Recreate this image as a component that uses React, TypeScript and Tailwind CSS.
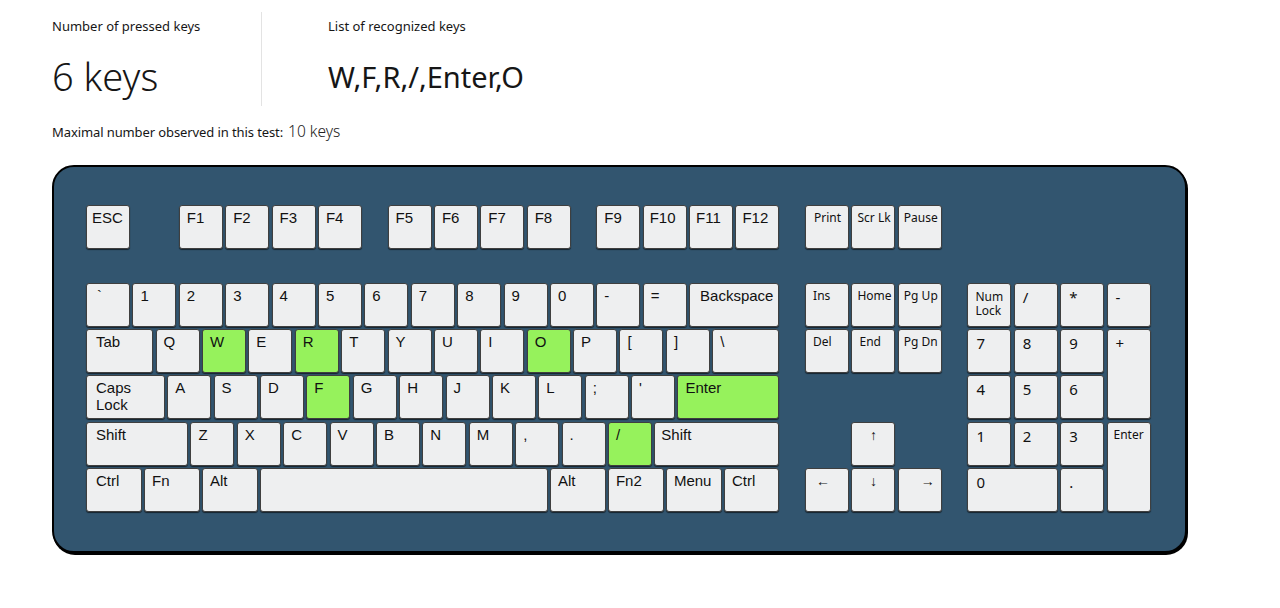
import clsx from 'clsx'

// keyboard geometry: one key unit and the gap between keys
const U = 46.4
const G = 2.4

type K = { l: string; u?: number; on?: boolean; gap?: number; pad?: string }

const fnRow: K[] = [
  { l: 'ESC', pad: 'pl-[5px]' },
  { l: '', gap: 1 },
  { l: 'F1' }, { l: 'F2' }, { l: 'F3' }, { l: 'F4' },
  { l: '', gap: 0.5 },
  { l: 'F5' }, { l: 'F6' }, { l: 'F7' }, { l: 'F8' },
  { l: '', gap: 0.5 },
  { l: 'F9' }, { l: 'F10', pad: 'pl-[6px]' }, { l: 'F11', pad: 'pl-[6px]' }, { l: 'F12', pad: 'pl-[6px]' },
]

const mainRows: K[][] = [
  [
    { l: '`', pad: 'pl-[10px]' }, { l: '1' }, { l: '2' }, { l: '3' }, { l: '4' }, { l: '5' }, { l: '6' },
    { l: '7' }, { l: '8' }, { l: '9' }, { l: '0' }, { l: '-' }, { l: '=' },
    { l: 'Backspace', u: 2, pad: 'pl-[10px]' },
  ],
  [
    { l: 'Tab', u: 1.5, pad: 'pl-[9px]' }, { l: 'Q' }, { l: 'W', on: true }, { l: 'E' }, { l: 'R', on: true },
    { l: 'T' }, { l: 'Y' }, { l: 'U' }, { l: 'I' }, { l: 'O', on: true }, { l: 'P' }, { l: '[' }, { l: ']' },
    { l: '\\', u: 1.5 },
  ],
  [
    { l: 'Caps\nLock', u: 1.75, pad: 'pl-[9px]' }, { l: 'A' }, { l: 'S' }, { l: 'D' }, { l: 'F', on: true },
    { l: 'G' }, { l: 'H' }, { l: 'J' }, { l: 'K' }, { l: 'L' }, { l: ';' }, { l: "'" },
    { l: 'Enter', u: 2.25, on: true },
  ],
  [
    { l: 'Shift', u: 2.25, pad: 'pl-[9px]' }, { l: 'Z' }, { l: 'X' }, { l: 'C' }, { l: 'V' }, { l: 'B' },
    { l: 'N' }, { l: 'M' }, { l: ',' }, { l: '.' }, { l: '/', on: true },
    { l: 'Shift', u: 2.75, pad: 'pl-[6px]' },
  ],
  [
    { l: 'Ctrl', u: 1.25, pad: 'pl-[9px]' }, { l: 'Fn', u: 1.25 }, { l: 'Alt', u: 1.25 }, { l: '', u: 6.25 },
    { l: 'Alt', u: 1.25 }, { l: 'Fn2', u: 1.25 }, { l: 'Menu', u: 1.25 }, { l: 'Ctrl', u: 1.25 },
  ],
]

function Key({ k, className }: { k: K; className?: string }) {
  const u = k.u ?? 1
  return (
    <div
      style={{ width: u * U - G, marginRight: G }}
      className={clsx(
        'h-[44px] shrink-0 whitespace-pre-line rounded-[3px] border border-[#3f3f3f] pt-[3px] text-[15px] leading-[17px] text-[#111] shadow-[0_1px_1px_rgba(0,0,0,0.6)]',
        "font-['Liberation_Sans',Arial,sans-serif]",
        k.on ? 'bg-[#96f25c]' : 'bg-[#eeeff0]',
        k.pad ?? 'pl-[7px]',
        className,
      )}
    >
      {k.l}
    </div>
  )
}

function Row({ keys }: { keys: K[] }) {
  return (
    <div className="flex">
      {keys.map((k, i) =>
        k.gap ? <div key={i} style={{ width: k.gap * U }} className="shrink-0" /> : <Key key={i} k={k} />,
      )}
    </div>
  )
}

// small-label keys used by the nav cluster and numpad
function Cap({ l, className }: { l: string; className?: string }) {
  return (
    <div
      className={clsx(
        'rounded-[3px] border border-[#3f3f3f] bg-[#eeeff0] pt-[4px] text-[#111] shadow-[0_1px_1px_rgba(0,0,0,0.6)]',
        "font-['Noto_Sans',sans-serif]",
        className ?? 'pl-[7px] text-[12px] leading-[15px]',
      )}
    >
      {l}
    </div>
  )
}

function Keyboard() {
  const num = 'pl-[8px] text-[15px] leading-[18px]'
  const arrow = "text-[14px] leading-[15px] font-['DejaVu_Sans',sans-serif]"
  return (
    <div className="ml-[52px] mt-[24px] flex h-[388px] w-[1135px] rounded-[22px] border-2 border-black bg-[#32556f] pl-[32px] pt-[38px] shadow-[1px_2px_0_#000]">
      {/* main block */}
      <div className="flex flex-col">
        <Row keys={fnRow} />
        <div className="mt-[33.7px] flex flex-col gap-[2.4px]">
          {mainRows.map((r, i) => (
            <Row key={i} keys={r} />
          ))}
        </div>
      </div>

      {/* nav cluster */}
      <div className="ml-[23.2px] flex flex-col">
        <div className="grid grid-cols-[repeat(3,44px)] gap-[2.4px]">
          <Cap l="Print" className="h-[44px] pl-[8px] text-[12px] leading-[15px]" />
          <Cap l="Scr Lk" className="h-[44px] pl-[5px] text-[12px] leading-[15px]" />
          <Cap l="Pause" className="h-[44px] pl-[5px] text-[12px] leading-[15px]" />
        </div>
        <div className="mt-[33.7px] grid grid-cols-[repeat(3,44px)] grid-rows-[repeat(5,44px)] gap-[2.4px]">
          <Cap l="Ins" />
          <Cap l="Home" className="pl-[5px] text-[12px] leading-[15px]" />
          <Cap l="Pg Up" className="pl-[5px] text-[12px] leading-[15px]" />
          <Cap l="Del" />
          <Cap l="End" />
          <Cap l="Pg Dn" className="pl-[5px] text-[12px] leading-[15px]" />
          <div className="col-start-2 row-start-4">
            <Cap l="↑" className={clsx('h-full text-center', arrow)} />
          </div>
          <Cap l="←" className={clsx('row-start-5 pl-[10px]', arrow)} />
          <Cap l="↓" className={clsx('row-start-5 text-center', arrow)} />
          <Cap l="→" className={clsx('row-start-5 pr-[6px] text-right', arrow)} />
        </div>
      </div>

      {/* numpad */}
      <div className="ml-[25.6px] mt-[77.7px] grid h-[229.6px] grid-cols-[repeat(4,44px)] grid-rows-[repeat(5,44px)] gap-[2.4px]">
        <Cap l={'Num\nLock'} className="whitespace-pre-line pl-[7px] pt-[6px] text-[12px] leading-[14px]" />
        <Cap l="/" className={num} />
        <Cap l="*" className={num} />
        <Cap l="-" className={num} />
        <Cap l="7" className={num} />
        <Cap l="8" className={num} />
        <Cap l="9" className={num} />
        <div className="row-span-2">
          <Cap l="+" className={clsx(num, 'h-full')} />
        </div>
        <Cap l="4" className={num} />
        <Cap l="5" className={num} />
        <Cap l="6" className={num} />
        <Cap l="1" className={num} />
        <Cap l="2" className={num} />
        <Cap l="3" className={num} />
        <div className="row-span-2">
          <Cap l="Enter" className="h-full text-center text-[12px] leading-[15px]" />
        </div>
        <div className="col-span-2">
          <Cap l="0" className={clsx(num, 'h-full')} />
        </div>
        <Cap l="." className={num} />
      </div>
    </div>
  )
}

export default function App() {
  return (
    <div className="min-h-[608px] w-[1280px] bg-white pt-[12px] text-[#161616] font-['Noto_Sans',sans-serif]">
      <div className="ml-[52px] flex">
        <div className="h-[94px] w-[210px] border-r border-[#e3e3e3] pt-[5px]">
          <div className="text-[13px] leading-[18px]">Number of pressed keys</div>
          <div className="mt-[18px] text-[38px] font-light leading-[46px]">6 keys</div>
        </div>
        <div className="pl-[66px] pt-[5px]">
          <div className="text-[13px] leading-[18px]">List of recognized keys</div>
          <div className="mt-[21px] text-[29px] leading-[42px]">W,F,R,/,Enter,O</div>
        </div>
      </div>
      <div className="ml-[52px] mt-[16px] flex items-baseline gap-[5px]">
        <span className="text-[13px] leading-[18px] tracking-[-0.1px]">Maximal number observed in this test:</span>
        <span className="text-[15.5px] font-light leading-[18px] text-[#222]">10 keys</span>
      </div>
      <Keyboard />
    </div>
  )
}
